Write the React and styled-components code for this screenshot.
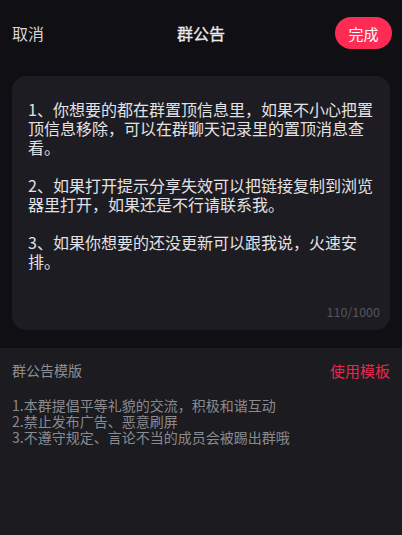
import React from "react";
import styled, { createGlobalStyle } from "styled-components";

const GlobalStyle = createGlobalStyle`
  html, body {
    margin: 0;
    padding: 0;
    background: #1c1b20;
  }
  body {
    font-family: "Noto Sans CJK SC", "Noto Sans", sans-serif;
  }
`;

const Page = styled.div`
  display: flex;
  flex-direction: column;
  width: 402px;
  min-height: 535px;
  background: #1c1b20;
`;

const Top = styled.div`
  display: flex;
  flex-direction: column;
  background: #0f0f14;
  padding-bottom: 18px;
`;

const Header = styled.div`
  display: flex;
  align-items: center;
  justify-content: space-between;
  height: 66px;
  padding: 0 10px 0 12px;
  position: relative;
`;

const Cancel = styled.span`
  font-size: 16px;
  color: #d6d6d8;
`;

const Title = styled.span`
  position: absolute;
  left: 50%;
  transform: translateX(-50%);
  font-size: 16px;
  font-weight: 400;
  -webkit-text-stroke: 0.3px #ececee;
  color: #ececee;
`;

const DoneButton = styled.button`
  height: 32px;
  width: 57px;
  border: none;
  border-radius: 16px;
  background: #fe2c55;
  color: #fff;
  font-family: inherit;
  font-size: 15px;
  padding: 0;
`;

const Card = styled.div`
  display: flex;
  flex-direction: column;
  margin: 10px 12px 0;
  height: 254px;
  box-sizing: border-box;
  padding: 24px 16px 10px;
  background: #1d1c22;
  border-radius: 14px;
`;

const Content = styled.div`
  flex: 1;
  font-size: 16px;
  line-height: 19px;
  color: #e2e2e4;
  white-space: pre-wrap;
  line-break: strict;
`;

const Counter = styled.div`
  align-self: flex-end;
  font-size: 12.5px;
  line-height: 16px;
  color: #55555b;
  margin-right: -6px;
`;

const Templates = styled.div`
  display: flex;
  flex-direction: column;
  padding: 12px 12px;
`;

const TemplateHead = styled.div`
  display: flex;
  align-items: center;
  justify-content: space-between;
  height: 20px;
`;

const TemplateLabel = styled.span`
  font-size: 14px;
  color: #8f8f94;
`;

const UseTemplate = styled.span`
  font-size: 15px;
  color: #e8284e;
`;

const RuleList = styled.div`
  margin-top: 17px;
  font-size: 14px;
  line-height: 16px;
  color: #8a8a8f;
`;

const text = `1、你想要的都在群置顶信息里，如果不小心把置顶信息移除，可以在群聊天记录里的置顶消息查看。

2、如果打开提示分享失效可以把链接复制到浏览器里打开，如果还是不行请联系我。

3、如果你想要的还没更新可以跟我说，火速安排。`;

const rules = [
  "1.本群提倡平等礼貌的交流，积极和谐互动",
  "2.禁止发布广告、恶意刷屏",
  "3.不遵守规定、言论不当的成员会被踢出群哦"
];

export default function App() {
  return (
    <Page>
      <GlobalStyle />
      <Top>
        <Header>
          <Cancel>取消</Cancel>
          <Title>群公告</Title>
          <DoneButton>完成</DoneButton>
        </Header>
        <Card>
          <Content>{text}</Content>
          <Counter>110/1000</Counter>
        </Card>
      </Top>
      <Templates>
        <TemplateHead>
          <TemplateLabel>群公告模版</TemplateLabel>
          <UseTemplate>使用模板</UseTemplate>
        </TemplateHead>
        <RuleList>
          {rules.map(r => (
            <div key={r}>{r}</div>
          ))}
        </RuleList>
      </Templates>
    </Page>
  );
}
